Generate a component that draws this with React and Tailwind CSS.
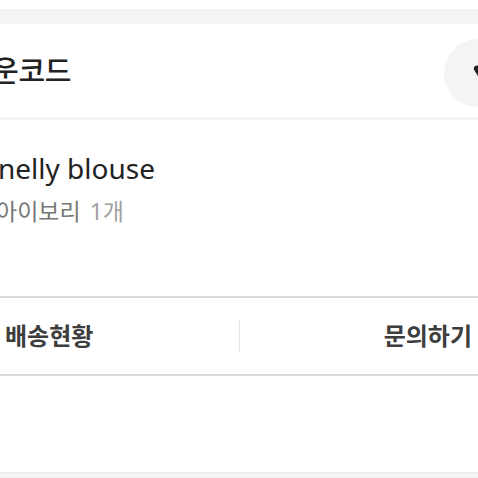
import React from 'react';

const font = { fontFamily: '"Noto Sans", "Noto Sans CJK KR", sans-serif' };

const App = () => {
  return (
    <div className="w-[478px] h-[478px] overflow-hidden bg-white" style={font}>
      {/* top spacing */}
      <div className="h-[9px] bg-white" />
      <div className="h-[15px] bg-[#f3f4f5]" />

      {/* Header */}
      <div className="h-[96px] flex items-center justify-between border-b-[3px] border-[#f3f3f3]">
        <h2 className="ml-[-8px] text-[29px] font-medium text-[#222] tracking-[-0.3px] whitespace-nowrap">운코드</h2>
        <div className="mr-[-34px] mt-[4px] w-[68px] h-[68px] rounded-full bg-[#f2f4f5] flex items-center pl-[29px]">
          <svg width="14" height="17" viewBox="0 0 16 18">
            <path d="M8 17 L1.5 6.5 C0 4 1.5 1 4.5 1 C6.2 1 7.4 2 8 3.2 C8.6 2 9.8 1 11.5 1 C14.5 1 16 4 14.5 6.5 Z" fill="#222" />
          </svg>
        </div>
      </div>

      {/* Product */}
      <div className="h-[176px] pt-[30px]">
        <p className="ml-[-2px] text-[28px] leading-[36px] text-[#222] whitespace-nowrap">nelly blouse</p>
        <p className="ml-[-4px] mt-[9px] text-[23px] leading-[32px] whitespace-nowrap">
          <span className="text-[#777]">아이보리</span>
          <span className="ml-[9px] text-[#a0a0a0]">1개</span>
        </p>
      </div>

      {/* Actions */}
      <div className="h-[80px] flex items-center border-t-2 border-b-2 border-[#d9d9d9]">
        <div className="flex-1 flex items-center h-full">
          <span className="ml-[5px] text-[24px] font-semibold text-[#3d3d3d] whitespace-nowrap">배송현황</span>
        </div>
        <div className="w-px h-[32px] bg-[#e6e6e6]" />
        <div className="flex-1 flex items-center justify-end h-full">
          <span className="mr-[6px] text-[24px] font-semibold text-[#3d3d3d] whitespace-nowrap">문의하기</span>
        </div>
      </div>

      <div className="h-[96px] bg-white" />
      <div className="h-[10px] bg-[#f3f4f5] border-t border-[#ececec]" />
    </div>
  );
};

export default App;
